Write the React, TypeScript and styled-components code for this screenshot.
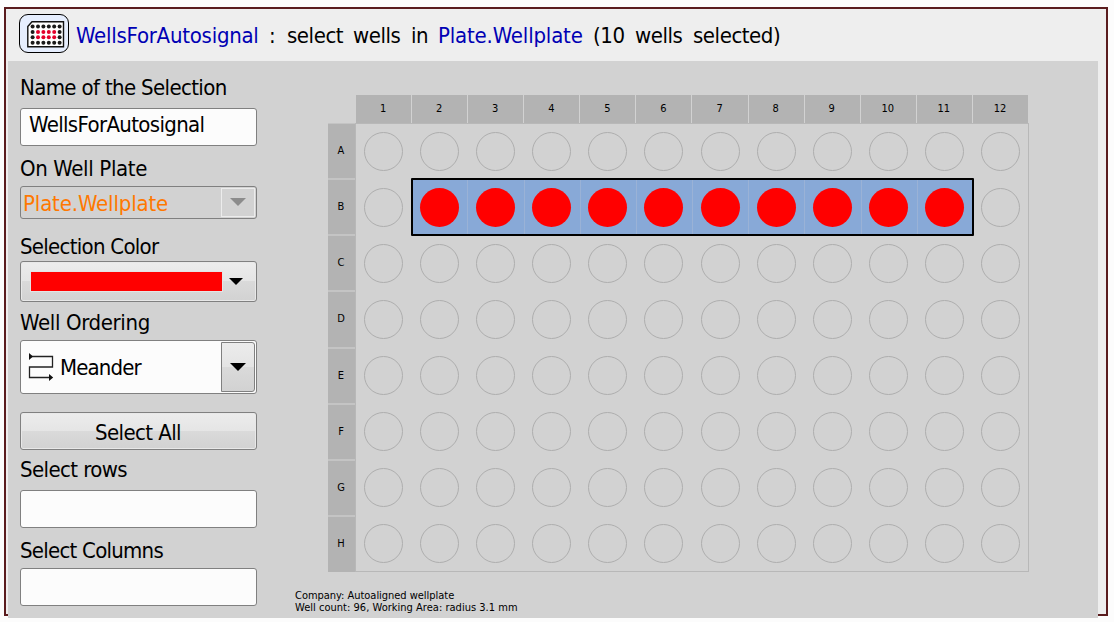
import React from "react";
import styled, { createGlobalStyle } from "styled-components";

const GlobalStyle = createGlobalStyle`
  *, *::before { box-sizing: border-box; }
  body {
    margin: 0;
    background: #fcfcfc;
    color: #000;
    font-family: "DejaVu Sans Condensed", "DejaVu Sans", sans-serif;
    font-stretch: condensed;
    overflow: hidden;
  }
`;

const Window = styled.main`
  width: 1104px;
  height: 609px;
  margin: 7px 0 6px 4px;
  border: 2px solid #5a1c1e;
  background: #eeeeee;
`;

const Header = styled.header`
  height: 52px;
  display: flex;
  align-items: flex-start;
  padding: 5px 0 0 13px;
`;

const IconFrame = styled.div`
  width: 50px;
  height: 39px;
  border: 1px solid #000;
  border-radius: 9px;
  background: #e6eefe;
  display: flex;
  padding: 6px 0 0 7px;
`;

const Title = styled.h1`
  margin: 9px 0 0 7px;
  font-size: 22px;
  font-weight: 400;
  line-height: 26px;
  white-space: pre;
  display: flex;
`;

const Part = styled.span<{ $width: number; $link?: boolean; $spacing?: number }>`
  width: ${(p) => p.$width}px;
  color: ${(p) => (p.$link ? "#0000b4" : "#000")};
  letter-spacing: ${(p) => p.$spacing ?? -0.45}px;
`;

const Body = styled.div`
  width: 1090px;
  height: 557px;
  margin-left: 2px;
  background: #d2d2d2;
  display: flex;
  position: relative;
`;

const Sidebar = styled.aside`
  width: 249px;
  padding: 14px 0 0 12px;
  display: flex;
  flex-direction: column;
`;

const Label = styled.label<{ $before?: number; $after: number; $spacing?: number }>`
  height: 26px;
  margin: ${(p) => p.$before ?? 0}px 0 ${(p) => p.$after}px;
  font-size: 22px;
  line-height: 26px;
  letter-spacing: ${(p) => p.$spacing ?? -0.6}px;
  white-space: pre;
`;

const Field = styled.div`
  height: 38px;
  border: 1px solid #808080;
  border-radius: 3px;
  background: #fcfcfc;
  padding: 3px 8px;
  font-size: 22px;
  line-height: 26px;
  letter-spacing: -0.65px;
`;

const Combo = styled.div<{ $height: number; $disabled?: boolean }>`
  height: ${(p) => p.$height}px;
  border: 1px solid #808080;
  border-radius: 3px;
  background: ${(p) => (p.$disabled ? "#d2d2d2" : "#fcfcfc")};
  color: ${(p) => (p.$disabled ? "#ff7800" : "#000")};
  display: flex;
  align-items: center;
  padding: 1px 1px 1px 2px;
  font-size: 22px;
  line-height: 26px;
`;

const ComboText = styled.span<{ $spacing: number }>`
  flex: 1;
  padding-top: 2px;
  white-space: pre;
  letter-spacing: ${(p) => p.$spacing}px;
`;

const DropButton = styled.div<{ $disabled?: boolean }>`
  align-self: stretch;
  width: 34px;
  border: 1px solid ${(p) => (p.$disabled ? "#ececec" : "#808080")};
  border-radius: ${(p) => (p.$disabled ? 0 : "0 3px 3px 0")};
  background: ${(p) =>
    p.$disabled ? "#d2d2d2" : "linear-gradient(#ececec 0, #e4e4e4 50%, #dadada 50%, #d2d2d2 100%)"};
  display: flex;
  align-items: center;
  justify-content: center;
  padding-bottom: ${(p) => (p.$disabled ? 2 : 0)}px;
`;

const Arrow = styled.i<{ $color?: string; $size?: number }>`
  border: ${(p) => p.$size ?? 8}px solid transparent;
  border-top-color: ${(p) => p.$color ?? "#000"};
  border-bottom: 0;
`;

const RaisedButton = styled.div<{ $height: number; $before?: number }>`
  height: ${(p) => p.$height}px;
  margin-top: ${(p) => p.$before ?? 0}px;
  border: 1px solid #808080;
  border-radius: 3px;
  background: linear-gradient(#ececec 0, #e5e5e5 50%, #dadada 50%, #d2d2d2 100%);
  box-shadow: inset 0 0 0 1px #e8e8e8;
  display: flex;
  align-items: center;
  font-size: 22px;
  line-height: 26px;
  letter-spacing: -0.6px;
`;

const ButtonText = styled.span`
  width: 100%;
  text-align: center;
  padding: 4px 1px 0 0;
`;

const Swatch = styled.div`
  width: 193px;
  height: 21px;
  margin: 0 6px 0 9px;
  border: 1px solid #e4e4e4;
  background: #ff0000;
`;

const PlateArea = styled.section`
  padding: 34px 0 0 71px;
`;

const Plate = styled.div`
  display: grid;
  grid-template-columns: 27px 674px;
  grid-template-rows: 28px 449px;
`;

const ColumnHeads = styled.div`
  grid-column: 2;
  display: grid;
  grid-template-columns: repeat(12, 1fr);
  background: #b3b3b3;
  width: 673px;
`;

const ColumnHead = styled.div`
  border-left: 1px solid #d2d2d2;
  padding-right: 1px;
  font-size: 11px;
  line-height: 28px;
  text-align: center;
`;

const RowHeads = styled.div`
  display: grid;
  grid-template-rows: repeat(8, 1fr);
  background: #b3b3b3;
`;

const RowHead = styled.div`
  border-top: 1px solid #c4c4c4;
  font-size: 11px;
  text-align: center;
  padding: 20px 1px 0 0;
  line-height: 14px;
  & + & {
    border-top: 2px solid #c4c4c4;
    margin-top: -1px;
  }
`;

const Wells = styled.div`
  position: relative;
  display: grid;
  grid-template-columns: repeat(12, 1fr);
  grid-template-rows: repeat(8, 1fr);
  box-shadow: inset 0 0 0 1px #b8b8b8;
`;

const Well = styled.div<{ $selected: boolean; $divider: boolean }>`
  display: flex;
  align-items: center;
  justify-content: center;
  background: ${(p) => (p.$selected ? "#88a9d7" : "transparent")};
  box-shadow: ${(p) => (p.$divider ? "inset 1px 0 0 #9ab2d6" : "none")};
  &::before {
    content: "";
    width: 39px;
    height: 39px;
    border-radius: 50%;
    border: ${(p) => (p.$selected ? "0" : "1px solid #aeaeae")};
    background: ${(p) => (p.$selected ? "#ff0000" : "transparent")};
  }
`;

const SelectionOutline = styled.div`
  position: absolute;
  left: 56px;
  top: 55px;
  width: 563px;
  height: 58px;
  border: 2px solid #000;
  border-radius: 1px;
`;

const Info = styled.p`
  margin: 18px 0 0 -33px;
  font-size: 11px;
  line-height: 12px;
`;

const InfoLine = styled.span<{ $spacing: number }>`
  display: block;
  letter-spacing: ${(p) => p.$spacing}px;
`;

const columns = Array.from({ length: 12 }, (_, i) => i + 1);
const rows = ["A", "B", "C", "D", "E", "F", "G", "H"];

function WellPlateIcon() {
  return (
    <svg width="38" height="27" viewBox="0 0 38 27">
      <path d="M0.8 5.5 L5 0.8 H36.5 V25.8 H0.8 Z" fill="#fff" stroke="#111" strokeWidth="1.4" />
      {[0, 1, 2, 3].map((r) =>
        [0, 1, 2, 3, 4, 5].map((c) => (
          <circle
            key={`${r}-${c}`}
            cx={5.6 + c * 5.4}
            cy={5.6 + r * 5.35}
            r="2"
            fill={(r === 1 || r === 2) && c > 0 && c < 5 ? "#e3002b" : "#1a1a1a"}
          />
        ))
      )}
    </svg>
  );
}

function MeanderIcon() {
  return (
    <svg width="26" height="28" viewBox="0 0 26 28">
      <path d="M1.5 3.5H24.5V14H1.5V24.5H22" fill="none" stroke="#222" strokeWidth="1.3" />
      <path d="M1 0 L5 3.5 L1 7Z M21 21 L25.2 24.5 L21 28Z" fill="#111" />
    </svg>
  );
}

const ComboIcon = styled.span`
  display: flex;
  width: 32px;
  margin: 0 0 0 5px;
`;

export default function App() {
  return (
    <>
      <GlobalStyle />
      <Window>
        <Header>
          <IconFrame>
            <WellPlateIcon />
          </IconFrame>
          <Title>
            <Part $width={193} $spacing={-0.25} $link>WellsForAutosignal</Part>
            <Part $width={18}>:</Part>
            <Part $width={66}>select</Part>
            <Part $width={58}>wells</Part>
            <Part $width={27}>in</Part>
            <Part $width={155} $spacing={-0.18} $link>Plate.Wellplate</Part>
            <Part $width={42}>(10</Part>
            <Part $width={58}>wells</Part>
            <Part $width={100}>selected)</Part>
          </Title>
        </Header>
        <Body>
          <Sidebar>
            <Label $after={7} $spacing={-0.64}>Name of the Selection</Label>
            <Field>WellsForAutosignal</Field>
            <Label $before={10} $after={4} $spacing={-0.35}>On Well Plate</Label>
            <Combo $height={33} $disabled>
              <ComboText $spacing={-0.15}>Plate.Wellplate</ComboText>
              <DropButton $disabled>
                <Arrow $color="#8c8c8c" />
              </DropButton>
            </Combo>
            <Label $before={15} $after={1} $spacing={-0.72}>Selection Color</Label>
            <RaisedButton $height={41}>
              <Swatch />
              <Arrow $size={7} />
            </RaisedButton>
            <Label $before={8} $after={4} $spacing={-0.36}>Well Ordering</Label>
            <Combo $height={54}>
              <ComboIcon>
                <MeanderIcon />
              </ComboIcon>
              <ComboText $spacing={-0.85}>Meander</ComboText>
              <DropButton>
                <Arrow />
              </DropButton>
            </Combo>
            <RaisedButton $height={38} $before={18}>
              <ButtonText>Select All</ButtonText>
            </RaisedButton>
            <Label $before={7} $after={7}>Select rows</Label>
            <Field />
            <Label $before={10} $after={4} $spacing={-0.75}>Select Columns</Label>
            <Field />
          </Sidebar>
          <PlateArea>
            <Plate>
              <ColumnHeads>
                {columns.map((c) => (
                  <ColumnHead key={c}>{c}</ColumnHead>
                ))}
              </ColumnHeads>
              <RowHeads>
                {rows.map((r) => (
                  <RowHead key={r}>{r}</RowHead>
                ))}
              </RowHeads>
              <Wells>
                {rows.map((r) =>
                  columns.map((c) => {
                    const selected = r === "B" && c >= 2 && c <= 11;
                    return <Well key={r + c} $selected={selected} $divider={selected && c > 2} />;
                  })
                )}
                <SelectionOutline />
              </Wells>
            </Plate>
            <Info>
              <InfoLine $spacing={-0.03}>Company: Autoaligned wellplate</InfoLine>
              <InfoLine $spacing={0.02}>Well count: 96, Working Area: radius 3.1 mm</InfoLine>
            </Info>
          </PlateArea>
        </Body>
      </Window>
    </>
  );
}
